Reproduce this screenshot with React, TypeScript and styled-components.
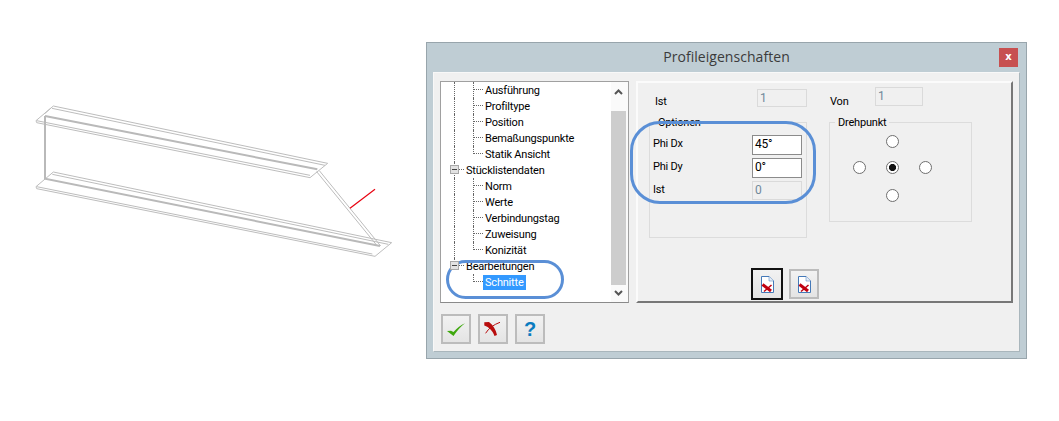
import React from "react";
import styled, { createGlobalStyle } from "styled-components";

const Global = createGlobalStyle`
  html, body { margin: 0; padding: 0; background: #fff; }
  body { font-family: Roboto, "Liberation Sans", sans-serif; font-size: 11px; letter-spacing: -0.2px; color: #000; }
`;

const Page = styled.div`
  display: flex; align-items: flex-start;
  width: 1059px; height: 421px; overflow: hidden;
  padding: 42px 0 0 0; box-sizing: border-box;
`;
const Drawing = styled.svg`
  flex: none; width: 420px; height: 200px; margin: 38px 6px 0 0;
`;
const Dialog = styled.section`
  position: relative; flex: none; box-sizing: border-box;
  width: 601px; height: 317px;
  background: #bfcdd4; border: 1px solid #98a5ac;
  display: flex; flex-direction: column;
`;
const TitleBar = styled.header`
  flex: none; height: 29px; display: grid;
  grid-template-columns: 1fr auto 1fr; align-items: start;
`;
const Title = styled.h1`
  grid-column: 2; margin: 4px 0 0; font: 400 14px/20px "Open Sans", sans-serif; color: #3b3b3b;
  letter-spacing: 0.05px;
`;
const Close = styled.div`
  grid-column: 3; justify-self: end; margin: 5px 8px 0 0;
  width: 19px; height: 19px; background: #c75050; color: #fff;
  font: 700 10px/18px "DejaVu Sans", sans-serif; text-align: center;
`;
const Body = styled.div`
  flex: 1; margin: 0 6px 6px; padding: 8px 6px 0; box-sizing: border-box;
  background: #f0f0f0; border: 1px solid #f8f8f8; border-color: #f8f8f8 #a9b6bc #a9b6bc #f8f8f8;
`;
const TopRow = styled.div`display: flex; gap: 7px; height: 222px;`;
const Tree = styled.div`
  flex: none; width: 189px; box-sizing: border-box; background: #fff;
  border: 1px solid #a0a0a0; border-bottom-color: #8a8a8a; display: flex;
`;
const TreeList = styled.div`flex: 1; min-width: 0;`;
const Row = styled.div`display: flex; height: 16px; align-items: stretch;`;
const Margin = styled.span<{ $w: number }>`flex: none; width: ${p => p.$w}px;`;
const Trunk = styled.span<{ $w: number; $half?: boolean }>`
  flex: none; width: ${p => p.$w}px; box-sizing: border-box;
  ${p => p.$half ? "height: 8px;" : ""} border-left: 1px dotted #666;
`;
const Branch = styled.span<{ $half?: boolean }>`
  flex: none; width: 10px; box-sizing: border-box;
  height: ${p => p.$half ? "8px" : "16px"};
  border-left: 1px dotted #666; position: relative;
  &::after { content: ""; position: absolute; left: 0; right: 0; top: 7px; border-top: 1px dotted #666; }
`;
const Expander = styled.span`
  flex: none; width: 9px; height: 9px; margin: 3px 0 0 -5px; box-sizing: border-box;
  background: #e2e2e2; border: 1px solid #a8a8a8; position: relative; z-index: 1;
  &::after { content: ""; position: absolute; left: 1px; right: 1px; top: 3px; height: 1px; background: #444; }
`;
const Stub = styled.span`
  flex: none; width: 5px; height: 8px; box-sizing: border-box; border-bottom: 1px dotted #666;
`;
const Node = styled.span<{ $selected?: boolean }>`
  height: 15px; line-height: 15px; padding: 0 2px; margin-top: 1px;
  align-self: flex-start; white-space: nowrap;
  ${p => p.$selected ? "background: #3399ff; color: #fff;" : ""}
`;
const Scroll = styled.div`
  flex: none; width: 17px; display: flex; flex-direction: column; background: #fafafa;
`;
const Arrow = styled.svg`flex: none; width: 15px; height: 16px; display: block;`;
const ArrowUp = styled(Arrow)`height: 29px;`;
const ArrowDown = styled(Arrow)`height: 17px;`;
const Thumb = styled.div`flex: 1; width: 15px; background: #cdcdcd;`;

const Panel = styled.div`
  flex: none; width: 377px; box-sizing: border-box; height: 222px;
  border: 2px solid; border-color: #fbfbfb #777 #777 #fbfbfb;
  padding: 4px 0 1px 11px; display: flex; flex-direction: column;
`;
const Columns = styled.div`display: flex; gap: 22px;`;
const Col = styled.div<{ $w: number }>`width: ${p => p.$w}px; flex: none;`;
const TopField = styled.div`display: flex; height: 29px;`;
const Label = styled.span<{ $w: number; $top?: number; $left?: number }>`
  flex: none; box-sizing: border-box; width: ${p => p.$w}px;
  padding: ${p => p.$top ?? 0}px 0 0 ${p => p.$left ?? 0}px; line-height: 15px;
`;
const Input = styled.div<{ $w?: number; $h?: number; $off?: boolean; $top?: number }>`
  flex: none; box-sizing: border-box; width: ${p => p.$w ?? 50}px; height: ${p => p.$h ?? 20}px;
  margin-top: ${p => p.$top ?? 0}px;
  padding: 1px 2px; line-height: 15px; font-size: 12px;
  border: 1px solid ${p => p.$off ? "#dadada" : "#8b8b8b"};
  background: ${p => p.$off ? "#f0f0f0" : "#fff"};
  color: ${p => p.$off ? "#71889a" : "#000"};
`;
const Group = styled.fieldset<{ $h: number }>`
  margin: 0; padding: 0; box-sizing: border-box; height: ${p => p.$h}px;
  border: 1px solid #dcdcdc; min-inline-size: 0;
`;
const Legend = styled.legend`
  padding: 0 3px; margin-left: 5px; line-height: 13px; height: 13px;
`;
const OptionRows = styled.div`
  display: flex; flex-direction: column; gap: 3px; padding: 6px 0 0 3px;
`;
const OptionRow = styled.div`display: flex; align-items: flex-start;`;
const RadioGrid = styled.div`
  display: grid; margin: 6px 0 0 23px; grid-template-columns: repeat(3, 13px);
  column-gap: 20px; grid-template-rows: 26px 28px 13px;
`;
const Radio = styled.span<{ $col: number; $row: number; $on?: boolean }>`
  grid-column: ${p => p.$col}; grid-row: ${p => p.$row};
  width: 13px; height: 13px; box-sizing: border-box; border-radius: 50%;
  border: 1px solid #6f6f6f; background: #fff;
  ${p => p.$on ? "background: radial-gradient(circle, #111 0 3.2px, #fff 3.9px);" : ""}
`;
const DocButtons = styled.div`
  margin-top: auto; padding-left: 102px; display: flex; align-items: center; gap: 6px;
`;
const IconBtn = styled.div<{ $focus?: boolean }>`
  flex: none; box-sizing: border-box; display: flex; align-items: center; justify-content: center;
  width: ${p => p.$focus ? 32 : 30}px; height: ${p => p.$focus ? 32 : 30}px;
  border: ${p => p.$focus ? "2px solid #111" : "2px solid #bcbcbc"};
  background: linear-gradient(#f2f2f2, #e4e4e4);
`;
const Footer = styled.div`display: flex; gap: 7px; padding: 11px 0 0 1px;`;
const Help = styled.span`font: 700 20px/26px "Liberation Sans", sans-serif; color: #0b7cc0;`;
const Mark = styled.div<{ $x: number; $y: number; $w: number; $h: number; $r: number }>`
  position: absolute; left: ${p => p.$x}px; top: ${p => p.$y}px;
  width: ${p => p.$w}px; height: ${p => p.$h}px; border-radius: ${p => p.$r}px;
  box-sizing: border-box; border: 3.5px solid #5a8fd6; pointer-events: none;
`;

const DocIcon = () => (
  <svg width="13" height="17" viewBox="0 0 13 17">
    <path d="M.5.5H8L12.5 5V16.5H.5Z" fill="#fff" stroke="#4479b8" />
    <path d="M8 .5V5H12.5" fill="#e6eef7" stroke="#4479b8" strokeDasharray="1 1" />
    <path d="M1.500 8.500L10 15" stroke="#c00010" strokeWidth="3" fill="none" />
    <path d="M3 15.500L10.500 9" stroke="#c00010" strokeWidth="1.500" fill="none" />
  </svg>
);
const lines = [
  "M160 78L983 250","M156 85L975 256","M110 122L930 286","M110 128L930 293",
  "M160 78L108 122L110 128","M983 250L930 293","M152 85L135 100",
  "M160 276L1175 488","M157 283L1165 493","M110 320L1117 522","M110 326L1125 529",
  "M160 276L108 320L110 326","M1175 488L1125 529","M958 272L1142 498","M950 275L1132 498",
];

const level2 = (name: string, last?: boolean, selected?: boolean, trunk = true) => (
  <Row key={name}>
    <Margin $w={13} />
    {trunk ? <Trunk $w={19} /> : <Margin $w={19} />}
    <Branch $half={last} />
    <Node $selected={selected}>{name}</Node>
  </Row>
);
const level1 = (name: string, lastTrunk?: boolean) => (
  <Row key={name}>
    <Margin $w={13} />
    <Trunk $w={1} $half={lastTrunk} />
    <Expander />
    <Stub />
    <Node>{name}</Node>
  </Row>
);

export default function App() {
  return (
    <Page>
      <Global />
      <Drawing viewBox="0 0 1260 600" fill="none">
        {lines.map(d => <path key={d} d={d} stroke="#bdbdbd" strokeWidth="3" />)}
        <path d="M135 108L952 268M135 108V296L1140 498" stroke="#b9b9b9" strokeWidth="6" />
        <path d="M1050 385L1125 328" stroke="#e8000f" strokeWidth="3.5" />
      </Drawing>
      <Dialog>
        <TitleBar>
          <Title>Profileigenschaften</Title>
          <Close>x</Close>
        </TitleBar>
        <Body>
          <TopRow>
            <Tree>
              <TreeList>
                {level2("Ausführung")}
                {level2("Profiltype")}
                {level2("Position")}
                {level2("Bemaßungspunkte")}
                {level2("Statik Ansicht", true)}
                {level1("Stücklistendaten")}
                {level2("Norm")}
                {level2("Werte")}
                {level2("Verbindungstag")}
                {level2("Zuweisung")}
                {level2("Konizität", true)}
                {level1("Bearbeitungen", true)}
                {level2("Schnitte", true, true, false)}
              </TreeList>
              <Scroll>
                <ArrowUp viewBox="0 0 15 29" fill="none">
                  <path d="M4 12L7.500 8.500L11 12" stroke="#555" strokeWidth="2" />
                </ArrowUp>
                <Thumb />
                <ArrowDown viewBox="0 0 15 17" fill="none">
                  <path d="M4 6L7.500 9.500L11 6" stroke="#555" strokeWidth="2" />
                </ArrowDown>
              </Scroll>
            </Tree>
            <Panel>
              <Columns>
                <Col $w={158}>
                  <TopField>
                    <Label $w={108} $top={7} $left={6}>Ist</Label>
                    <Input $off $w={50} $h={18} $top={2}>1</Input>
                  </TopField>
                  <Group $h={122}>
                    <Legend>Optionen</Legend>
                    <OptionRows>
                      <OptionRow><Label $w={99} $top={1}>Phi Dx</Label><Input>45°</Input></OptionRow>
                      <OptionRow><Label $w={99} $top={1}>Phi Dy</Label><Input>0°</Input></OptionRow>
                      <OptionRow><Label $w={99} $top={1}>Ist</Label><Input $off $h={19}>0</Input></OptionRow>
                    </OptionRows>
                  </Group>
                </Col>
                <Col $w={143}>
                  <TopField>
                    <Label $w={46} $top={7} $left={1}>Von</Label>
                    <Input $off $w={48} $h={19}>1</Input>
                  </TopField>
                  <Group $h={106}>
                    <Legend>Drehpunkt</Legend>
                    <RadioGrid>
                      <Radio $col={2} $row={1} />
                      <Radio $col={1} $row={2} />
                      <Radio $col={2} $row={2} $on />
                      <Radio $col={3} $row={2} />
                      <Radio $col={2} $row={3} />
                    </RadioGrid>
                  </Group>
                </Col>
              </Columns>
              <DocButtons>
                <IconBtn $focus><DocIcon /></IconBtn>
                <IconBtn><DocIcon /></IconBtn>
              </DocButtons>
            </Panel>
          </TopRow>
          <Footer>
            <IconBtn>
              <svg width="26" height="26" viewBox="0 0 26 26">
                <path d="M4 15L8 14.700L10.500 16C14 12 18 9 22 7.300C18 10 14 15 10.500 20Z" fill="#3fa80f" />
              </svg>
            </IconBtn>
            <IconBtn>
              <svg width="26" height="26" viewBox="0 0 26 26">
                <path d="M4.300 6.300L9 6C13 9 16 14 17 19L14.500 20C13 15 9 11 4.300 9.500Z" fill="#b80d0d" />
                <path d="M5.600 17.300Q10 10 20 6.300" stroke="#b80d0d" fill="none" />
              </svg>
            </IconBtn>
            <IconBtn><Help>?</Help></IconBtn>
          </Footer>
        </Body>
        <Mark $x={203} $y={78} $w={186} $h={83} $r={30} />
        <Mark $x={19} $y={217} $w={118} $h={39} $r={20} />
      </Dialog>
    </Page>
  );
}
